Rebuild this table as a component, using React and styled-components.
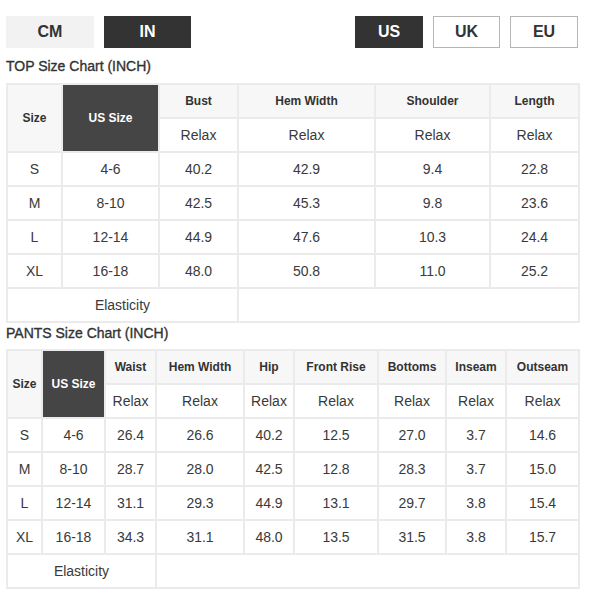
import styled, { createGlobalStyle } from "styled-components";

const Global = createGlobalStyle`
  body {
    margin: 0;
    background: #fff;
    font-family: "Liberation Sans", Arial, sans-serif;
    color: #333;
  }
`;

const Page = styled.div`
  width: 572px;
  padding: 16px 0 0 6px;
`;

const Toolbar = styled.div`
  display: flex;
  justify-content: space-between;
`;

const Group = styled.div`
  display: flex;
  gap: 10px;
`;

const Toggle = styled.button`
  width: ${p => p.$w}px;
  height: 32px;
  padding: 0;
  font-family: inherit;
  font-size: 16px;
  font-weight: bold;
  color: ${p => (p.$active ? "#fff" : "#333")};
  background: ${p => (p.$active ? "#333" : p.$soft ? "#f2f2f2" : "#fff")};
  border: 1px solid ${p => (p.$active ? "#333" : p.$soft ? "#f2f2f2" : "#b5b5b5")};
  cursor: pointer;
`;

const Title = styled.div`
  font-size: 14px;
  line-height: 20px;
  color: #333;
  -webkit-text-stroke: 0.35px #333;
  margin: ${p => (p.$first ? "8px 0 7px" : "0 0 6px")};
`;

const Table = styled.table`
  width: 572px;
  table-layout: fixed;
  border-collapse: collapse;
  border: 2px solid #ebebeb;
`;

const Row = styled.tr`
  height: 34px;
`;

const Head = styled.th`
  border: 2px solid #ebebeb;
  padding: 0;
  font-size: 12px;
  font-weight: bold;
  color: ${p => (p.$dark ? "#fff" : "#333")};
  background: ${p => (p.$dark ? "#454545" : "#f7f7f7")};
  text-align: center;
`;

const Cell = styled.td`
  border: 2px solid #ebebeb;
  padding: 0;
  font-size: 14px;
  color: #3a3a3a;
  text-align: center;
  background: #fff;
`;

const topCols = [55, 97, 79, 137, 115, 89];
const topHeads = ["Bust", "Hem Width", "Shoulder", "Length"];
const topRows = [
  ["S", "4-6", "40.2", "42.9", "9.4", "22.8"],
  ["M", "8-10", "42.5", "45.3", "9.8", "23.6"],
  ["L", "12-14", "44.9", "47.6", "10.3", "24.4"],
  ["XL", "16-18", "48.0", "50.8", "11.0", "25.2"],
];

const pantsCols = [35, 63, 51, 88, 50, 84, 68, 60, 73];
const pantsHeads = ["Waist", "Hem Width", "Hip", "Front Rise", "Bottoms", "Inseam", "Outseam"];
const pantsRows = [
  ["S", "4-6", "26.4", "26.6", "40.2", "12.5", "27.0", "3.7", "14.6"],
  ["M", "8-10", "28.7", "28.0", "42.5", "12.8", "28.3", "3.7", "15.0"],
  ["L", "12-14", "31.1", "29.3", "44.9", "13.1", "29.7", "3.8", "15.4"],
  ["XL", "16-18", "34.3", "31.1", "48.0", "13.5", "31.5", "3.8", "15.7"],
];

function SizeTable({ cols, heads, rows }) {
  return (
    <Table>
      <colgroup>
        {cols.map((w, i) => (
          <col key={i} style={{ width: w }} />
        ))}
      </colgroup>
      <tbody>
        <Row>
          <Head rowSpan={2}>Size</Head>
          <Head rowSpan={2} $dark>US Size</Head>
          {heads.map(h => (
            <Head key={h}>{h}</Head>
          ))}
        </Row>
        <Row>
          {heads.map(h => (
            <Cell key={h}>Relax</Cell>
          ))}
        </Row>
        {rows.map(r => (
          <Row key={r[0]}>
            {r.map((v, i) => (
              <Cell key={i}>{v}</Cell>
            ))}
          </Row>
        ))}
        <Row>
          <Cell colSpan={3}>Elasticity</Cell>
          <Cell colSpan={cols.length - 3} />
        </Row>
      </tbody>
    </Table>
  );
}

export default function App() {
  return (
    <>
      <Global />
      <Page>
        <Toolbar>
          <Group>
            <Toggle $w={88} $soft>CM</Toggle>
            <Toggle $w={87} $active>IN</Toggle>
          </Group>
          <Group>
            <Toggle $w={68} $active>US</Toggle>
            <Toggle $w={67}>UK</Toggle>
            <Toggle $w={68}>EU</Toggle>
          </Group>
        </Toolbar>
        <Title $first>TOP Size Chart (INCH)</Title>
        <SizeTable cols={topCols} heads={topHeads} rows={topRows} />
        <Title>PANTS Size Chart (INCH)</Title>
        <SizeTable cols={pantsCols} heads={pantsHeads} rows={pantsRows} />
      </Page>
    </>
  );
}
